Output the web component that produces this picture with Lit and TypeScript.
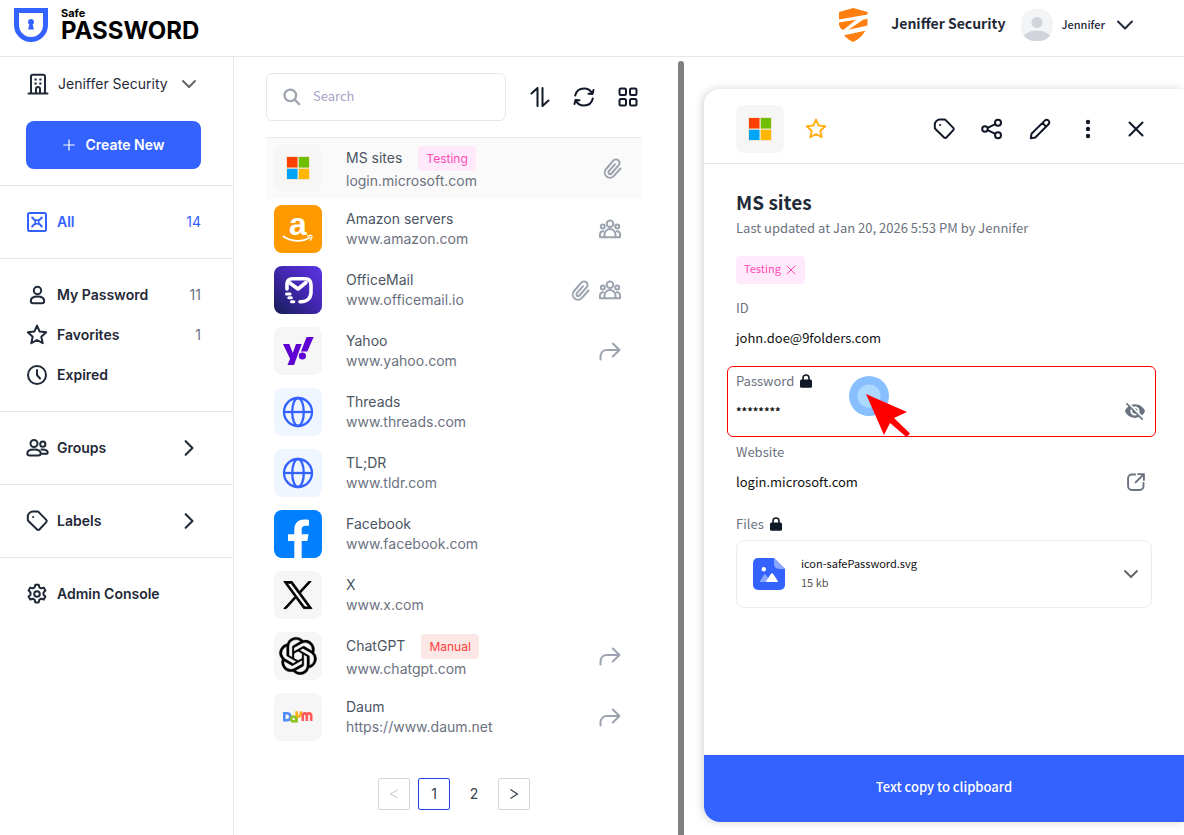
import { LitElement, html, svg, css, nothing, TemplateResult } from "lit";
import { customElement, property, state } from "lit/decorators.js";
import { classMap } from "lit/directives/class-map.js";

const line = (body: unknown, size = 24, width = 2) => html`<svg
  width=${size} height=${size} viewBox="0 0 24 24" fill="none" stroke="currentColor"
  stroke-width=${width} stroke-linecap="round" stroke-linejoin="round" aria-hidden="true">${body}</svg>`;

const starPath = svg`<path d="M12 2.600l2.700 6 6.500.7-4.900 4.400 1.400 6.500L12 17l-5.700 3.200 1.400-6.500L2.800 9.300l6.500-.7z"/>`;
const tagPath = svg`<path d="M8 2.600h4.400a2 2 0 0 1 1.300.5l7.600 7.800a1.600 1.600 0 0 1 0 2.200l-6.900 7.400a1.600 1.600 0 0 1-2.300 0L3.400 12a2 2 0 0 1-.6-1.400V7.800a5.200 5.200 0 0 1 5.200-5.200z"/><circle cx="8" cy="8" r="0.600" stroke-width="1"/>`;

const icons = {
  building: line(svg`<path d="M2.500 21.500h19M5 21V4.500A1.800 1.800 0 0 1 6.800 2.700h10.400A1.800 1.800 0 0 1 19 4.500V21M10 21v-4a2 2 0 0 1 4 0v4"/><path stroke-linecap="butt" d="M8.500 7.500h2.200M13.300 7.500h2.200M8.500 11.500h2.200M13.300 11.500h2.200"/>`),
  all: line(svg`<rect x="3" y="3" width="18" height="18" rx="1.500"/><path d="M7.200 7.500l2 2.200 1.500.8M16.800 7.500l-2 2.200-1.500.8M7.200 16.500l2-2.200 1.500-.8M16.800 16.500l-2-2.200-1.500-.8"/><rect x="10.300" y="10.300" width="3.400" height="3.400" stroke-width="1.500"/>`),
  user: line(svg`<circle cx="12.500" cy="7.500" r="3.700"/><path d="M5.800 18c0-3 3-4.500 6.700-4.500s6.700 1.500 6.700 4.500c0 1.700-1 2.300-2.500 2.300H8.300c-1.500 0-2.500-.6-2.500-2.300z"/>`),
  star: line(starPath),
  clock: line(svg`<circle cx="12" cy="12" r="9"/><path d="M12 7v5l3 3.500"/>`),
  group: line(svg`<circle cx="9" cy="7.500" r="3.500"/><circle cx="17.800" cy="8.200" r="2.600"/><path d="M2.300 17.500c0-2.600 3-4 6.700-4s6.700 1.400 6.700 4c0 1.500-1 2-2.500 2H4.800c-1.500 0-2.500-.5-2.500-2zM16.500 13.500c3.500-.4 6.200 1 6.200 2.900 0 1-.8 1.400-1.900 1.400h-5"/>`),
  tag: line(tagPath),
  gear: line(svg`<circle cx="12" cy="12" r="2.800"/><path d="M10.300 2.800h3.400l.6 2.500 1.900 1.100 2.500-.8 1.700 3-1.900 1.800v2.300l1.900 1.800-1.700 3-2.500-.8-1.900 1.100-.6 2.600h-3.400l-.6-2.600-1.900-1.100-2.500.8-1.700-3 1.900-1.800v-2.300L3.600 8.600l1.700-3 2.500.8 1.900-1.100z"/>`),
  chevronRight: line(svg`<path d="M8 3.800l8.200 8.200L8 20.200"/>`, 20, 2.500),
  chevronDown: line(svg`<path d="M5 8.500l7 7 7-7"/>`),
  chevronSmall: line(svg`<path d="M6 9l6 6 6-6"/>`),
  plus: line(svg`<path d="M12 3v18M3 12h18"/>`, 14, 2),
  search: line(svg`<circle cx="10" cy="10" r="7"/><path d="M15.200 15.200l5.500 5.500"/>`, 20, 2.700),
  sort: line(svg`<path d="M3.500 8.500L9.500 3v18M20.500 15.500l-6 5.500V3"/>`),
  sync: line(svg`<path d="M3.200 10.500C4.200 6.200 7.700 3.500 12 3.500c3.500 0 6.500 1.800 8 4.800M20.800 13.500c-1 4.300-4.500 7-8.800 7-3.500 0-6.500-1.800-8-4.800"/><path d="M16.500 8.700l4 .2 1-4M7.500 15.300l-4-.2-1 4" />`),
  grid: line(svg`<rect x="3.500" y="3.500" width="6.500" height="6.500" rx="1.500"/><rect x="14" y="3.500" width="6.500" height="6.500" rx="1.500"/><rect x="3.500" y="14" width="6.500" height="6.500" rx="1.500"/><rect x="14" y="14" width="6.500" height="6.500" rx="1.500"/>`),
  clip: html`<svg width="20" height="24" viewBox="0 0 20 24" fill="none" stroke="currentColor" stroke-width="2" stroke-linecap="round" stroke-linejoin="round" aria-hidden="true"><path d="M18.500 12.500l-6.300 7.200c-2 2.300-5.300 2.700-7.600.8-2.300-2-2.500-5.200-.5-7.500l7.200-8.300c1.300-1.500 3.500-1.700 5-.4s1.700 3.400.4 4.900l-7.200 8.300c-.7.800-1.800.9-2.500.2s-.8-1.700-.1-2.500l6-6.900"/></svg>`,
  people: line(svg`<circle cx="12" cy="6.700" r="3.300"/><circle cx="4.800" cy="9.500" r="2"/><circle cx="19.200" cy="9.500" r="2"/><path d="M6.500 20.300v-2.800a5.500 5.500 0 0 1 11 0v2.800z"/><path d="M6.500 20.300H2v-3c0-2.100 1.400-3.200 3.300-3M17.500 20.300H22v-3c0-2.100-1.400-3.200-3.300-3"/>`),
  forward: line(svg`<path d="M2.500 20.500v-2.800c0-4 2.500-6.700 6.500-6.700h12M14.800 4.500L21.500 11l-6.700 6.500"/>`),
  share: line(svg`<circle cx="5" cy="12" r="2.800"/><circle cx="18" cy="5.700" r="3"/><circle cx="18" cy="18.300" r="3"/><path d="M7.700 10.800l7.500-3.700M7.700 13.200l7.500 3.700"/>`),
  pencil: line(svg`<path d="M2.800 21.200l.7-4.500L16.800 3.600a2.600 2.600 0 0 1 3.700 3.700L7.300 20.500zM14.500 6l3.600 3.600"/>`),
  more: html`<svg width="24" height="24" viewBox="0 0 24 24" fill="currentColor" aria-hidden="true"><circle cx="12" cy="5" r="2.200"/><circle cx="12" cy="12" r="2.200"/><circle cx="12" cy="19" r="2.200"/></svg>`,
  close: line(svg`<path d="M5.500 5.500l13 13M18.500 5.500l-13 13"/>`),
  smallClose: line(svg`<path d="M4 4l16 16M20 4L4 20"/>`, 12, 2),
  lock: html`<svg width="12" height="14" viewBox="0 0 12 14" aria-hidden="true"><path d="M3 6V4a3 3 0 0 1 6 0v2" fill="none" stroke="currentColor" stroke-width="1.600"/><rect y="5.500" width="12" height="8.200" rx="1.500" fill="currentColor"/></svg>`,
  eyeOff: html`<svg width="22" height="22" viewBox="0 0 24 24" fill="currentColor" aria-hidden="true"><path d="M12 7c2.760 0 5 2.240 5 5 0 .65-.13 1.260-.36 1.830l2.920 2.920c1.510-1.260 2.700-2.890 3.430-4.750-1.730-4.390-6-7.500-11-7.500-1.400 0-2.740.25-3.980.7l2.160 2.160C10.740 7.130 11.350 7 12 7zM2 4.270l2.280 2.280.46.46C3.080 8.300 1.780 10.020 1 12c1.730 4.390 6 7.500 11 7.500 1.550 0 3.030-.3 4.380-.84l.42.42L19.730 22 21 20.730 3.270 3 2 4.270zM7.530 9.800l1.550 1.550c-.05.21-.08.43-.08.65 0 1.660 1.340 3 3 3 .22 0 .44-.03.65-.08l1.550 1.550c-.67.33-1.410.53-2.200.53-2.760 0-5-2.240-5-5 0-.79.2-1.530.53-2.200zm4.310-.78l3.150 3.150.02-.16c0-1.660-1.340-3-3-3l-.17.01z"/></svg>`,
  external: line(svg`<path d="M11 3H7a4.500 4.500 0 0 0-4.500 4.500V17A4.500 4.500 0 0 0 7 21.500h9.500A4.500 4.500 0 0 0 21 17v-4M14.500 2.500h7v7M21 3l-9.500 9.500"/>`, 20, 2.300),
  prev: line(svg`<path d="M18.500 4.500L5 12l13.500 7.500"/>`, 12, 2),
  next: line(svg`<path d="M5.500 3.500L19 12 5.500 20.500"/>`, 12, 2.500),
};

const tile = (body: unknown) => html`<svg width="48" height="48" viewBox="0 0 48 48" aria-hidden="true">${body}</svg>`;

const microsoft = tile(svg`<rect width="48" height="48" rx="8" fill="#f6f6f6"/><path fill="#f1e6d6" d="M12 12h24v24H12z"/>
  <path fill="#ff4000" d="M13 13h10.500v10.500H13z"/><path fill="#6fbe00" d="M24.800 13H35v10.500H24.800z"/>
  <path fill="#00a5f8" d="M13 24.800h10.500V35H13z"/><path fill="#ffb700" d="M24.800 24.800H35V35H24.800z"/>`);

const globe = tile(svg`<rect width="48" height="48" rx="8" fill="#eff6ff"/><g fill="none" stroke="#3462ff" stroke-width="2.300">
  <circle cx="24" cy="24" r="14"/><ellipse cx="24" cy="24" rx="5.800" ry="14"/><path d="M10 24h28"/></g>`);

const brands: Record<string, TemplateResult> = {
  microsoft,
  globe,
  amazon: tile(svg`<rect width="48" height="48" rx="8" fill="#ff9900"/>
    <text x="24" y="30" text-anchor="middle" font-family="Liberation Sans, sans-serif" font-weight="700" font-size="32" fill="#fff">a</text>
    <path d="M9.500 31.500c8 5.500 19 5.600 26 .9" fill="none" stroke="#fff" stroke-width="1.800" stroke-linecap="round"/>
    <path d="M33.500 31c2-.7 4-.6 4.300-.1s-.3 2.700-1.500 4.200" fill="none" stroke="#fff" stroke-width="1.300" stroke-linecap="round" stroke-linejoin="round"/>`),
  officemail: tile(svg`<defs><linearGradient id="om" x1="0" y1="1" x2="1" y2="0"><stop offset="0" stop-color="#151d55"/><stop offset=".55" stop-color="#4527b4"/><stop offset="1" stop-color="#5a35e4"/></linearGradient></defs>
    <rect width="48" height="48" rx="8" fill="url(#om)"/>
    <g fill="none" stroke="#fff" stroke-width="3.600" stroke-linecap="round" stroke-linejoin="round"><path d="M13 23v-5c0-3.300 2-5.200 5.500-5.200H31c3.800 0 6 2.200 6 6V26c0 6-3.700 9.700-9.700 9.700H26"/><path d="M14.500 16l9.500 7 8-6.500"/><path d="M12.500 28h3.600M14.800 31.800h2.500M17.500 35.700h2.300" stroke-width="3"/></g>`),
  yahoo: tile(svg`<rect width="48" height="48" rx="8" fill="#f6f6f6"/><g fill="#5f01d1"><path d="M9 17h6.300l3.500 9 3.200-9h5.700L20 38h-6.500l2.600-6.200z"/><path d="M32.600 10h7l-6.300 14.500H27z"/><circle cx="28.400" cy="29" r="3.600"/></g>`),
  facebook: tile(svg`<rect width="48" height="48" rx="8" fill="#0080ff"/><path fill="#fff" d="M20.300 48V31H14v-6.700h6.300V20c0-6.700 3.600-10.500 10-10.500 1.700 0 3.200.1 4.700.4v5.800h-3.200c-3.100 0-4.100 1.400-4.100 4v4.600h6.800L33.300 31h-5.600v17z"/>`),
  x: tile(svg`<rect width="48" height="48" rx="8" fill="#f6f6f6"/><path transform="translate(9.500 10.500) scale(1.200 1.130)" d="M14.234 10.162 22.977 0h-2.072l-7.591 8.824L7.251 0H.258l9.168 13.343L.258 24H2.330l8.016-9.318L16.749 24h6.993zm-2.837 3.299-.929-1.329L3.076 1.560h3.182l5.965 8.532.929 1.329 7.754 11.090h-3.182z" stroke="#000" stroke-width=".8"/>`),
  openai: tile(svg`<rect width="48" height="48" rx="8" fill="#f6f6f6"/><path transform="translate(5.300 5.200) scale(1.560)" stroke="#000" stroke-width=".2" d="M22.2819 9.8211a5.9847 5.9847 0 0 0-.5157-4.9108 6.0462 6.0462 0 0 0-6.5098-2.9A6.0651 6.0651 0 0 0 4.9807 4.1818a5.9847 5.9847 0 0 0-3.9977 2.9 6.0462 6.0462 0 0 0 .7427 7.0966 5.98 5.98 0 0 0 .511 4.9107 6.051 6.051 0 0 0 6.5146 2.9001A5.9847 5.9847 0 0 0 13.2599 24a6.0557 6.0557 0 0 0 5.7718-4.2058 5.9894 5.9894 0 0 0 3.9977-2.9001 6.0557 6.0557 0 0 0-.7475-7.0729zm-9.022 12.6081a4.4755 4.4755 0 0 1-2.8764-1.0408l.1419-.0804 4.7783-2.7582a.7948.7948 0 0 0 .3927-.6813v-6.7369l2.02 1.1686a.071.071 0 0 1 .038.052v5.5826a4.504 4.504 0 0 1-4.4945 4.4944zm-9.6607-4.1254a4.4708 4.4708 0 0 1-.5346-3.0137l.142.0852 4.783 2.7582a.7712.7712 0 0 0 .7806 0l5.8428-3.3685v2.3324a.0804.0804 0 0 1-.0332.0615L9.74 19.9502a4.4992 4.4992 0 0 1-6.1408-1.6464zM2.3408 7.8956a4.485 4.485 0 0 1 2.3655-1.9728V11.6a.7664.7664 0 0 0 .3879.6765l5.8144 3.3543-2.0201 1.1685a.0757.0757 0 0 1-.071 0l-4.8303-2.7865A4.504 4.504 0 0 1 2.3408 7.872zm16.5963 3.8558L13.1038 8.364 15.1192 7.2a.0757.0757 0 0 1 .071 0l4.8303 2.7913a4.4944 4.4944 0 0 1-.6765 8.1042v-5.6772a.79.79 0 0 0-.407-.667zm2.0107-3.0231l-.142-.0852-4.7735-2.7818a.7759.7759 0 0 0-.7854 0L9.409 9.2297V6.8974a.0662.0662 0 0 1 .0284-.0615l4.8303-2.7866a4.4992 4.4992 0 0 1 6.6802 4.66zM8.3065 12.863l-2.02-1.1638a.0804.0804 0 0 1-.038-.0567V6.0742a4.4992 4.4992 0 0 1 7.3757-3.4537l-.142.0805L8.704 5.459a.7948.7948 0 0 0-.3927.6813zm1.0976-2.3654l2.602-1.4998 2.6069 1.4998v2.9994l-2.5974 1.4997-2.6067-1.4997Z"/>`),
  daum: tile(svg`<rect width="48" height="48" rx="8" fill="#f6f6f6"/><g fill="none" stroke-width="2.600">
    <path stroke="#4f8bfa" d="M10.300 20.300h2.400c2.400 0 3.700 1.400 3.700 3.500s-1.300 3.500-3.700 3.500h-2.400z"/>
    <circle cx="19.600" cy="26" r="2.500" stroke="#8fc31f"/><path stroke="#8fc31f" d="M22.600 22.500v7"/>
    <path stroke="#ffae1a" d="M22.600 18.300v2.400c0 1.700.8 2.700 2.100 2.700s2.100-1 2.100-2.700v-2.400"/>
    <path stroke="#ff5959" d="M28.800 28v-7.500M28.800 22.800c0-1.700.9-2.400 2-2.400s2 .7 2 2.400V28M32.800 22.800c0-1.700.9-2.400 2.200-2.400s2.200.7 2.200 2.400V28"/></g>`),
};

interface Entry {
  name: string;
  url: string;
  brand: string;
  tag?: { text: string; tone: string };
  marks?: (keyof typeof icons)[];
}

const entries: Entry[] = [
  { name: "MS sites", url: "login.microsoft.com", brand: "microsoft", tag: { text: "Testing", tone: "pink" }, marks: ["clip"] },
  { name: "Amazon servers", url: "www.amazon.com", brand: "amazon", marks: ["people"] },
  { name: "OfficeMail", url: "www.officemail.io", brand: "officemail", marks: ["clip", "people"] },
  { name: "Yahoo", url: "www.yahoo.com", brand: "yahoo", marks: ["forward"] },
  { name: "Threads", url: "www.threads.com", brand: "globe" },
  { name: "TL;DR", url: "www.tldr.com", brand: "globe" },
  { name: "Facebook", url: "www.facebook.com", brand: "facebook" },
  { name: "X", url: "www.x.com", brand: "x" },
  { name: "ChatGPT", url: "www.chatgpt.com", brand: "openai", tag: { text: "Manual", tone: "red" }, marks: ["forward"] },
  { name: "Daum", url: "https://www.daum.net", brand: "daum", marks: ["forward"] },
];

const base = css`
  * { box-sizing: border-box; margin: 0; padding: 0; }
  button { font: inherit; color: inherit; background: none; border: 0; cursor: pointer; }
  a { color: inherit; text-decoration: none; }
  ul { list-style: none; }
  svg { display: block; flex: none; }
`;

@customElement("app-header")
class AppHeader extends LitElement {
  static styles = [base, css`
    :host { display: block; }
    .bar { display: flex; align-items: center; justify-content: space-between; height: 57px; padding: 0 47px 6px 14px; border-bottom: 1px solid #e5e7eb; }
    .brand { display: flex; align-items: center; gap: 13px; color: #000; }
    .words { display: flex; flex-direction: column; font-family: Inter, sans-serif; font-weight: 700; }
    .small { font-size: 11px; line-height: 12px; }
    .large { font-size: 24px; line-height: 24px; }
    .account { display: flex; align-items: center; font-family: "Noto Sans CJK KR", sans-serif; color: #1f2937; }
    .company { margin: 0 16px 0 21px; padding-bottom: 4px; font-size: 14px; line-height: 24px; font-weight: 700; }
    .me { display: flex; align-items: center; gap: 8px; font-size: 11px; line-height: 20px; font-weight: 500; }
    .who { padding-bottom: 2px; }
  `];
  render() {
    return html`<header class="bar">
      <a class="brand" href="#">
        <svg width="34" height="34" viewBox="0 0 34 34" aria-hidden="true"><path d="M2.500 2.500h29V17a14.500 14.500 0 0 1-29 0z" fill="#fff" stroke="#3462ff" stroke-width="5"/><path d="M17 11a3 3 0 0 1 1.700 5.500l1.200 5h-5.800l1.200-5A3 3 0 0 1 17 11z" fill="#3462ff"/></svg>
        <span class="words"><span class="small">Safe</span><span class="large">PASSWORD</span></span>
      </a>
      <div class="account">
        <svg width="32" height="34" viewBox="0 0 32 34" fill="#ff7f0e" aria-hidden="true"><path d="M1 4L15.300 0l14.200 4v2.500L1 11.500z"/><path d="M1 14.500L18 11.800 5 22.300Q1.500 20 1 17z"/><path d="M29.500 10.800v6.700L10.500 21.700 25 11.700z"/><path d="M6 27.200l21.300-4.500c-2 4.300-6 8-12 11.300-3.500-1.500-6.700-3.800-9.300-6.800z"/></svg>
        <strong class="company">Jeniffer Security</strong>
        <button class="me">
          <svg width="32" height="32" viewBox="0 0 32 32" aria-hidden="true"><defs><clipPath id="av"><rect width="32" height="32" rx="14"/></clipPath></defs><g clip-path="url(#av)"><path fill="#f3f4f6" d="M0 0h32v32H0z"/><circle cx="16" cy="13.500" r="5.500" fill="#d1d5db"/><ellipse cx="16" cy="30" rx="14" ry="8.500" fill="#d1d5db"/></g></svg>
          <span class="who">Jennifer</span>${icons.chevronDown}
        </button>
      </div>
    </header>`;
  }
}

@customElement("app-sidebar")
class AppSidebar extends LitElement {
  static styles = [base, css`
    :host { display: block; border-right: 1px solid #e5e7eb; font: 600 14px/20px Inter, sans-serif; color: #1f2937; }
    .top { padding: 15px 32px 16px 26px; border-bottom: 1px solid #e5e7eb; }
    .company { display: flex; align-items: center; width: 100%; height: 24px; gap: 8px; font-weight: 400; margin-bottom: 25px; }
    .company span { flex: 1; text-align: left; }
    .fade { color: #666; display: flex; }
    .create { display: flex; align-items: center; justify-content: center; gap: 9px; width: 100%; height: 48px; border-radius: 8px; background: #3462ff; color: #fff; }
    .section { padding: 16px 32px 16px 25px; border-bottom: 1px solid #e5e7eb; }
    .section:last-child { border-bottom: 0; }
    .item { display: flex; align-items: center; gap: 8px; height: 40px; }
    .item span { flex: 1; }
    .count { font-style: normal; font-weight: 400; color: #6b7280; }
    .active, .active .count { color: #3462ff; }
    .open { padding: 2px; }
  `];
  item(icon: TemplateResult, text: string, end: unknown = nothing, active = false) {
    return html`<li><a class=${classMap({ item: true, active })} href="#">${icon}<span>${text}</span>${end}</a></li>`;
  }
  count(n: number) { return html`<em class="count">${n}</em>`; }
  render() {
    const arrow = html`<i class="open">${icons.chevronRight}</i>`;
    return html`<nav>
      <div class="top">
        <button class="company">${icons.building}<span>Jeniffer Security</span><i class="fade">${icons.chevronSmall}</i></button>
        <button class="create">${icons.plus}Create New</button>
      </div>
      <ul class="section">${this.item(icons.all, "All", this.count(14), true)}</ul>
      <ul class="section">
        ${this.item(icons.user, "My Password", this.count(11))}
        ${this.item(icons.star, "Favorites", this.count(1))}
        ${this.item(icons.clock, "Expired")}
      </ul>
      <ul class="section">${this.item(icons.group, "Groups", arrow)}</ul>
      <ul class="section">${this.item(icons.tag, "Labels", arrow)}</ul>
      <ul class="section">${this.item(icons.gear, "Admin Console")}</ul>
    </nav>`;
  }
}

@customElement("entry-list")
class EntryList extends LitElement {
  @property({ attribute: false }) entries: Entry[] = [];
  @state() selected = 0;
  static styles = [base, css`
    :host { display: block; padding: 16px 36px 24px 32px; font: 400 14px/20px Inter, sans-serif; color: #4b5563; }
    .tools { display: flex; align-items: center; gap: 20px; padding-right: 2px; margin-bottom: 16px; color: #111827; }
    .search { display: flex; align-items: center; gap: 11px; flex: 1; min-width: 0; height: 48px; padding: 0 15px; margin-right: 2px; border: 1px solid #e5e7eb; border-radius: 6px; color: #9ca3af; }
    .box { flex: 1; min-width: 0; padding-bottom: 3px; border: 0; outline: 0; background: none; font: 400 13px/20px "Noto Sans CJK KR", sans-serif; color: #1f2937; }
    .box::placeholder { color: #a5a3c5; opacity: 1; }
    .rows { border-top: 1px solid #e5e7eb; }
    .row { display: flex; align-items: center; gap: 24px; padding: 6px 20px 6px 8px; border-bottom: 1px solid transparent; cursor: pointer; }
    .selected { background: #fafafa; border-color: #fafafa; }
    .text { flex: 1; min-width: 0; }
    .title { display: flex; align-items: center; gap: 16px; }
    .url { display: block; color: #6b7280; }
    .tag { padding: 0 8px; border-radius: 4px; font-size: 12px; line-height: 25px; }
    .pink { background: #ffe9fb; color: #ff4db5; }
    .red { background: #fbe7e6; color: #ff4039; }
    .marks { display: flex; gap: 8px; color: #9ca3af; }
    .pages { display: flex; justify-content: center; gap: 8px; margin-top: 30px; }
    .page { display: flex; align-items: center; justify-content: center; width: 32px; height: 32px; border: 1px solid transparent; border-radius: 2px; color: #374151; }
    .edge { border-color: #d4d5da; }
    .current { border-color: #2341e0; }
    .page:disabled { color: #c4c4c4; }
  `];
  render() {
    return html`
      <div class="tools">
        <label class="search">${icons.search}<input class="box" type="search" placeholder="Search" aria-label="Search"></label>
        <button aria-label="Sort">${icons.sort}</button>
        <button aria-label="Refresh">${icons.sync}</button>
        <button aria-label="Grid view">${icons.grid}</button>
      </div>
      <ul class="rows">
        ${this.entries.map((e, i) => html`<li class=${classMap({ row: true, selected: i === this.selected })} @click=${() => (this.selected = i)}>
          ${brands[e.brand]}
          <div class="text">
            <div class="title">${e.name}${e.tag ? html`<span class="tag ${e.tag.tone}">${e.tag.text}</span>` : nothing}</div>
            <a class="url" href="#">${e.url}</a>
          </div>
          <div class="marks">${(e.marks ?? []).map((m) => icons[m])}</div>
        </li>`)}
      </ul>
      <nav class="pages" aria-label="Pages">
        <button class="page edge" disabled aria-label="Previous">${icons.prev}</button>
        <button class="page current">1</button>
        <button class="page">2</button>
        <button class="page edge" aria-label="Next">${icons.next}</button>
      </nav>`;
  }
}

@customElement("entry-detail")
class EntryDetail extends LitElement {
  static styles = [base, css`
    :host { display: flex; padding: 32px 0 13px 20px; font: 400 13px/20px "Noto Sans CJK KR", sans-serif; color: #111; }
    .card { flex: 1; min-width: 0; display: flex; flex-direction: column; border-radius: 16px 0 0 16px; overflow: hidden; background: #fff; }
    .shade { display: flex; flex: 1; min-width: 0; border-radius: 16px 0 0 16px; box-shadow: -2px 0 8px rgba(0, 0, 0, 0.16); }
    .head { display: flex; align-items: center; gap: 24px; padding: 16px 36px 10px 32px; border-bottom: 1px solid #e5e7eb; color: #111827; }
    .gold { color: #ffb117; margin-right: auto; margin-left: -4px; }
    .head button { display: flex; }
    .body { flex: 1; padding: 24px 32px; }
    .name { font-size: 19px; line-height: 28px; font-weight: 700; color: #1f2937; }
    .updated { line-height: 24px; color: #6b7280; }
    .tag { display: inline-flex; align-items: center; gap: 4px; height: 28px; margin: 16px 0 12px; padding: 0 8px; border-radius: 4px; font-size: 11px; background: #ffe9fb; color: #ff4db5; }
    .tagText { padding-bottom: 4px; }
    .field { position: relative; height: 72px; }
    .label { display: flex; align-items: center; gap: 6px; height: 24px; color: #6b7280; }
    .lock { color: #111827; }
    .value { display: flex; align-items: center; justify-content: space-between; height: 36px; padding-right: 6px; }
    .value button, .value .go { color: #6b7280; }
    .secret { margin: -2px -4px 3px -9px; height: 71px; padding: 2px 3px 0 8px; border: 1px solid #f00; border-radius: 6px; }
    .stars { font-size: 11px; font-weight: 700; }
    .pointer { position: absolute; left: 121px; top: 9px; pointer-events: none; }
    .file { display: flex; align-items: center; gap: 16px; width: 100%; height: 68px; padding: 0 8px 0 16px; border: 1px solid #ececec; border-radius: 8px; font-size: 11px; text-align: left; margin-top: 4px; }
    .fileText { flex: 1; line-height: 19px; padding-bottom: 3px; }
    .size { display: block; color: #555; }
    .caret { color: #666; }
    .copy { height: 67px; padding-bottom: 4px; background: #3462ff; color: #fff; font-weight: 500; }
  `];
  render() {
    return html`<div class="shade"><article class="card">
      <header class="head">
        ${microsoft}
        <button class="gold" aria-label="Favorite">${icons.star}</button>
        <button aria-label="Label">${icons.tag}</button>
        <button aria-label="Share">${icons.share}</button>
        <button aria-label="Edit">${icons.pencil}</button>
        <button aria-label="More">${icons.more}</button>
        <button aria-label="Close">${icons.close}</button>
      </header>
      <div class="body">
        <h1 class="name">MS sites</h1>
        <p class="updated">Last updated at Jan 20, 2026 5:53 PM by Jennifer</p>
        <div class="tag"><span class="tagText">Testing</span><button aria-label="Remove label">${icons.smallClose}</button></div>
        <dl>
          <div class="field"><dt class="label">ID</dt><dd class="value">john.doe@9folders.com</dd></div>
          <div class="field secret">
            <dt class="label">Password<span class="lock">${icons.lock}</span></dt>
            <dd class="value"><span class="stars">********</span><button aria-label="Show password">${icons.eyeOff}</button></dd>
            <svg class="pointer" width="62" height="64" viewBox="0 0 62 64" aria-hidden="true"><circle cx="20" cy="20" r="20" fill="#88c0ff"/><circle cx="20" cy="20" r="11.500" fill="#acd9ff"/><path d="M17 18l41 18-13 6 16 15.500-3.500 3.500L41 47l-6 12z" fill="#f00"/></svg>
          </div>
          <div class="field"><dt class="label">Website</dt><dd class="value">login.microsoft.com<a class="go" href="#" aria-label="Open website">${icons.external}</a></dd></div>
          <div><dt class="label">Files<span class="lock">${icons.lock}</span></dt>
            <dd><button class="file">
              <svg width="32" height="32" viewBox="0 0 32 32" aria-hidden="true"><path d="M5 0h16l11 11v16a5 5 0 0 1-5 5H5a5 5 0 0 1-5-5V5a5 5 0 0 1 5-5z" fill="#3462ff"/><path d="M21 0l11 11h-6a5 5 0 0 1-5-5z" fill="#8ba6ff"/><circle cx="10.800" cy="11.200" r="2.200" fill="#fff"/><path d="M7 23l3.800-6c.6-1 1.500-1 2.100 0L16 21v3H7.500c-.6 0-.9-.4-.5-1z" fill="#8ba6ff"/><path d="M13.300 23l4.500-7c.6-1 1.800-1 2.400 0l4.600 7c.3.600 0 1-.6 1H14c-.6 0-1-.4-.7-1z" fill="#fff"/></svg>
              <span class="fileText">icon-safePassword.svg<span class="size">15 kb</span></span>
              <span class="caret">${icons.chevronSmall}</span>
            </button></dd></div>
        </dl>
      </div>
      <button class="copy">Text copy to clipboard</button>
    </article></div>`;
  }
}

@customElement("app-root")
class AppRoot extends LitElement {
  static styles = css`
    :host { display: flex; flex-direction: column; min-height: 100vh; background: #fff; overflow: hidden; }
    .main { flex: 1; display: grid; grid-template-columns: 234px minmax(0, 1fr) 6px 500px; }
    .divider { margin-top: 4px; border-radius: 3px 3px 0 0; background: #808080; }
  `;
  render() {
    return html`<app-header></app-header>
      <main class="main">
        <app-sidebar></app-sidebar>
        <entry-list .entries=${entries}></entry-list>
        <div class="divider"></div>
        <entry-detail></entry-detail>
      </main>`;
  }
}
